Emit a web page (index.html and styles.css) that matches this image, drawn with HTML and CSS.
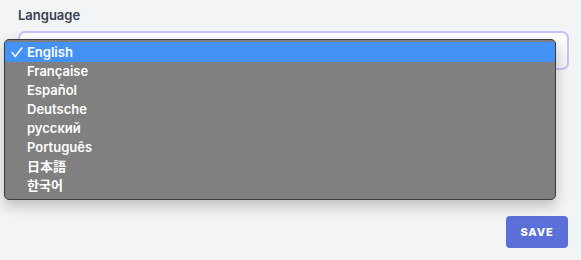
FILE: index.html
```html
<!DOCTYPE html>
<html lang="en">
<head>
<meta charset="utf-8">
<title>Language</title>
<link rel="stylesheet" href="styles.css">
</head>
<body>
<div class="page">
  <form class="form">
    <label class="label">Language</label>
    <div class="select"></div>
    <div class="actions">
      <button type="button" class="save">SAVE</button>
    </div>
  </form>
  <ul class="menu">
    <li class="item active"><svg class="check" width="12" height="11" viewBox="0 0 12 11"><polyline points="1.2,5.6 4.2,9.4 10.8,1" fill="none" stroke="#ffffff" stroke-width="1.6" stroke-linecap="round" stroke-linejoin="round"/></svg>English</li>
    <li class="item">Française</li>
    <li class="item">Español</li>
    <li class="item">Deutsche</li>
    <li class="item">русский</li>
    <li class="item">Português</li>
    <li class="item">日本語</li>
    <li class="item">한국어</li>
  </ul>
</div>
</body>
</html>
```
FILE: styles.css
```css
html, body {
  margin: 0;
  padding: 0;
  background: #f3f4f6;
}
.page {
  position: relative;
  width: 581px;
  height: 260px;
  font-family: Inter, "Liberation Sans", "Noto Sans CJK JP", "Noto Sans CJK KR", sans-serif;
}
.form {
  display: flex;
  flex-direction: column;
  padding: 5px 12px 0 18px;
}
.label {
  font-size: 13px;
  font-weight: 600;
  line-height: 20px;
  color: #374151;
}
.select {
  margin-top: 6px;
  height: 35px;
  border: 2px solid #c4c3f7;
  border-radius: 7px;
  background: linear-gradient(#ffffff, #f2f2f4);
}
.actions {
  display: flex;
  justify-content: flex-end;
  margin-top: 146px;
}
.save {
  width: 62px;
  height: 32px;
  border: none;
  border-radius: 4px;
  background: #5a6fd8;
  color: #ffffff;
  font-family: Inter, "Liberation Sans", sans-serif;
  font-size: 11px;
  font-weight: 800;
  letter-spacing: 0.8px;
  padding: 0;
  margin-right: 1px;
}
.menu {
  position: absolute;
  left: 4px;
  top: 39px;
  width: 550px;
  margin: 0;
  padding: 3px 0 4px;
  list-style: none;
  background: #808080;
  border: 1px solid #3c3c3c;
  border-radius: 5px;
  box-shadow: 0 6px 14px rgba(0, 0, 0, 0.22);
}
.item {
  position: relative;
  height: 19px;
  line-height: 19px;
  padding-left: 22px;
  font-size: 13px;
  font-weight: 600;
  color: #ffffff;
}
.item.active {
  background: #4592f6;
  height: 20px;
  line-height: 20px;
  margin-top: -1px;
  margin-bottom: 0;
}
.check {
  position: absolute;
  left: 6px;
  top: 5px;
}
```
